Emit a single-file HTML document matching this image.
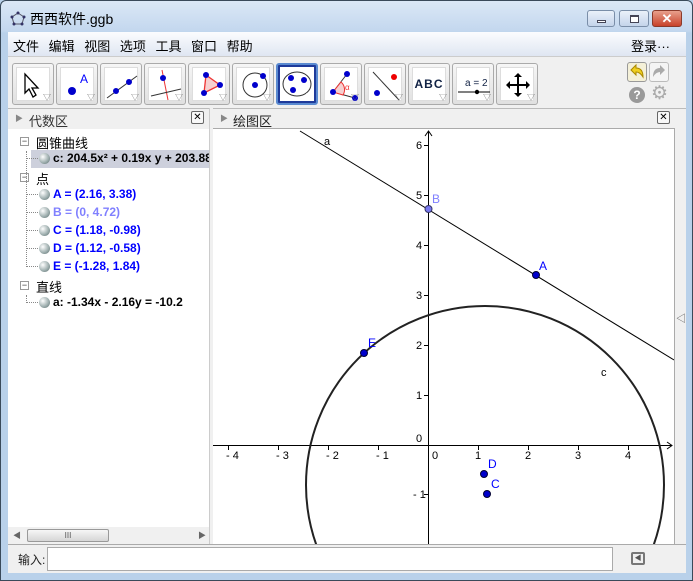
<!DOCTYPE html>
<html style="width:693px;height:581px;overflow:hidden"><head><meta charset="utf-8"><style>
*{margin:0;padding:0;box-sizing:border-box}
html,body{overflow:hidden}
body{width:693px;height:581px;overflow:hidden;position:relative;background:#b9d1ea;font-family:"Liberation Sans","Noto Sans CJK SC",sans-serif;font-size:12px;color:#000}
.a{position:absolute}
.tb{position:absolute;top:63px;width:42px;height:42px;border:1px solid #aaa;border-radius:3px;background:linear-gradient(#f6f6f6,#e0e0e0)}
.tb .in{position:absolute;left:3px;top:3px;width:34px;height:34px;background:#fff;border:1px solid #ddd}
.tb .tri{position:absolute;right:2px;bottom:1px;font-size:8px;color:#777}
.row{position:absolute;left:0;height:18px;font-size:12px;font-weight:bold;white-space:nowrap}
.ball{position:absolute;left:31px;width:11px;height:11px;border-radius:50%;background:radial-gradient(circle at 35% 35%,#fff,#9aa 60%,#566)}
.dot{position:absolute;left:18px;width:12px;border-top:1px dotted #888}
.cat{position:absolute;left:28px;font-size:13px}
.mn{position:absolute;left:12px;width:9px;height:9px;border:1px solid #999;background:#fff;font-size:9px;line-height:6px;text-align:center;color:#333}
</style></head><body>
<div class="a" style="left:0;top:0;width:693px;height:581px;border:1px solid #3a4a5a;border-radius:6px 6px 0 0;background:linear-gradient(#dbe8f6,#c3d7ee 30px,#b9d1ea 32px)"></div>
<svg class="a" style="left:10px;top:11px" width="16" height="16"><polygon points="8,2 14,6 12,13 4,13 2,6" fill="none" stroke="#556" stroke-width="1"/><g fill="#336"><circle cx="8" cy="2" r="1.5"/><circle cx="14" cy="6" r="1.5"/><circle cx="12" cy="13" r="1.5"/><circle cx="4" cy="13" r="1.5"/><circle cx="2" cy="6" r="1.5"/></g></svg>
<div class="a" style="left:30px;top:9px;font-size:14px">西西软件.ggb</div>
<div class="a" style="left:587px;top:10px;width:28px;height:17px;border:1px solid #7a8ea8;border-radius:3px;background:linear-gradient(#eaf1fa,#c4d4ea)"><div class="a" style="left:9px;top:9px;width:9px;height:3px;background:#fff;border:1px solid #445"></div></div>
<div class="a" style="left:619px;top:10px;width:30px;height:17px;border:1px solid #7a8ea8;border-radius:3px;background:linear-gradient(#eaf1fa,#c4d4ea)"><div class="a" style="left:10px;top:4px;width:9px;height:8px;border:1px solid #445;border-top-width:2px;background:#fff"></div></div>
<div class="a" style="left:652px;top:10px;width:30px;height:17px;border:1px solid #8a3a2a;border-radius:3px;background:linear-gradient(#e8a08c,#c8422a);color:#fff;font-weight:bold;text-align:center;font-size:13px;line-height:15px">✕</div>
<div class="a" style="left:8px;top:32px;width:678px;height:541px;background:#f0f0f0"></div>
<div class="a" style="left:8px;top:32px;width:678px;height:24px;background:linear-gradient(#fbfcfe,#dfe6f2)"></div>
<div class="a" style="left:13px;top:36px;font-size:13px;word-spacing:6px">文件 编辑 视图 选项 工具 窗口 帮助</div>
<div class="a" style="left:631px;top:36px;font-size:13px">登录···</div>
<div class="a" style="left:8px;top:56px;width:678px;height:1px;background:#ccc"></div>
<div class="tb" style="left:12px"><div class="in"><svg width="34" height="34"><path d="M8 6 L8 25 L12 21 L16 29 L19 27 L15 20 L21 20 Z" fill="#fff" stroke="#000" stroke-width="1.3"/></svg></div><span class="tri">▽</span></div>
<div class="tb" style="left:56px"><div class="in"><svg width="34" height="34"><circle cx="11" cy="23" r="4" fill="#00c"/><text x="19" y="15" font-family="Liberation Sans" font-size="12" fill="#00f">A</text></svg></div><span class="tri">▽</span></div>
<div class="tb" style="left:100px"><div class="in"><svg width="34" height="34"><line x1="2" y1="30" x2="32" y2="8" stroke="#333"/><circle cx="11" cy="23" r="3" fill="#00c"/><circle cx="24" cy="14" r="3" fill="#00c"/></svg></div><span class="tri">▽</span></div>
<div class="tb" style="left:144px"><div class="in"><svg width="34" height="34"><line x1="13" y1="2" x2="19" y2="32" stroke="#e33"/><line x1="2" y1="28" x2="32" y2="21" stroke="#333"/><circle cx="14" cy="10" r="3" fill="#00c"/></svg></div><span class="tri">▽</span></div>
<div class="tb" style="left:188px"><div class="in"><svg width="34" height="34"><polygon points="13,7 27,17 11,25" fill="#f6d0d0" stroke="#e33" stroke-width="1.3"/><circle cx="13" cy="7" r="3" fill="#00c"/><circle cx="27" cy="17" r="3" fill="#00c"/><circle cx="11" cy="25" r="3" fill="#00c"/></svg></div><span class="tri">▽</span></div>
<div class="tb" style="left:232px"><div class="in"><svg width="34" height="34"><circle cx="18" cy="17" r="12" fill="none" stroke="#333"/><circle cx="18" cy="17" r="3" fill="#00c"/><circle cx="26" cy="8" r="3" fill="#00c"/></svg></div><span class="tri">▽</span></div>
<div class="tb" style="left:276px;border:2px solid #5a8ad0;background:#1e3a9a"><div class="in" style="left:2px;top:2px;border:none"><svg width="34" height="34"><ellipse cx="17" cy="17" rx="14" ry="12" fill="none" stroke="#333"/><circle cx="11" cy="11" r="3" fill="#00c"/><circle cx="24" cy="13" r="3" fill="#00c"/><circle cx="13" cy="23" r="3" fill="#00c"/></svg></div><span class="tri" style="color:#fff">▽</span></div>
<div class="tb" style="left:320px"><div class="in"><svg width="34" height="34"><line x1="8" y1="24" x2="22" y2="6" stroke="#333"/><line x1="8" y1="24" x2="30" y2="30" stroke="#333"/><path d="M16 14 A10 10 0 0 1 18 27 L8 24Z" fill="#f6d0d0" stroke="#e33"/><text x="20" y="22" font-size="8" fill="#e33">α</text><circle cx="8" cy="24" r="3" fill="#00c"/><circle cx="22" cy="6" r="3" fill="#00c"/><circle cx="30" cy="30" r="3" fill="#00c"/></svg></div><span class="tri">▽</span></div>
<div class="tb" style="left:364px"><div class="in"><svg width="34" height="34"><line x1="4" y1="4" x2="30" y2="32" stroke="#333"/><circle cx="25" cy="9" r="3" fill="#e00"/><circle cx="8" cy="25" r="3" fill="#00c"/></svg></div><span class="tri">▽</span></div>
<div class="tb" style="left:408px"><div class="in" style="font-size:12px;font-weight:bold;color:#124;text-align:center;line-height:32px;letter-spacing:1px">ABC</div><span class="tri">▽</span></div>
<div class="tb" style="left:452px"><div class="in"><svg width="34" height="34"><text x="8" y="18" font-family="Liberation Sans" font-size="10" fill="#124">a = 2</text><line x1="1" y1="24" x2="33" y2="24" stroke="#000"/><circle cx="20" cy="24" r="2.2" fill="#000"/></svg></div><span class="tri">▽</span></div>
<div class="tb" style="left:496px"><div class="in"><svg width="34" height="34"><path d="M17 8V26M8 17H26" stroke="#000" stroke-width="2"/><path d="M17 5l-4 4h8zM17 29l-4-4h8zM5 17l4-4v8zM29 17l-4-4v8z" fill="#000"/></svg></div><span class="tri">▽</span></div>
<div class="a" style="left:627px;top:62px;width:20px;height:20px;border:1px solid #999;border-radius:3px;background:#f4f0d8"><svg width="18" height="18"><path d="M3 7 L8 2 L8 5 Q15 5 15 14 Q12 9 8 9 L8 12Z" fill="#f0d020" stroke="#a80"/></svg></div>
<div class="a" style="left:649px;top:62px;width:20px;height:20px;border:1px solid #bbb;border-radius:3px;background:#f4f4f4"><svg width="18" height="18"><path d="M15 7 L10 2 L10 5 Q3 5 3 14 Q6 9 10 9 L10 12Z" fill="#aaa"/></svg></div>
<div class="a" style="left:629px;top:87px;width:16px;height:16px;border-radius:50%;background:#999;color:#fff;font-weight:bold;text-align:center;line-height:16px;font-size:12px">?</div>
<div class="a" style="left:651px;top:84px;font-size:19px;line-height:20px;color:#aaa">⚙</div>
<div class="a" style="left:8px;top:108px;width:678px;height:1px;background:#bbb"></div>
<div class="a" style="left:15px;top:113px;font-size:8px;color:#888">▶</div>
<div class="a" style="left:29px;top:111px;font-size:13px;color:#333">代数区</div>
<div class="a" style="left:191px;top:111px;width:13px;height:13px;border:1px solid #666;border-radius:2px;font-size:10px;line-height:11px;text-align:center;background:#f8f8f8">✕</div>
<div class="a" style="left:220px;top:113px;font-size:8px;color:#888">▶</div>
<div class="a" style="left:233px;top:111px;font-size:13px;color:#222">绘图区</div>
<div class="a" style="left:657px;top:111px;width:13px;height:13px;border:1px solid #666;border-radius:2px;font-size:10px;line-height:11px;text-align:center;background:#f8f8f8">✕</div>
<div class="a" style="left:8px;top:129px;width:201px;height:398px;background:#fff;overflow:hidden">
<div class="mn" style="top:8px">−</div><div class="cat" style="top:4px">圆锥曲线</div>
<div class="a" style="left:23px;top:21px;width:178px;height:18px;background:#cdd0dc"></div>
<div class="dot" style="top:29px"></div><div class="ball" style="top:24px"></div><div class="row" style="left:45px;top:22px">c: 204.5x² + 0.19x y + 203.88</div>
<div class="mn" style="top:44px">−</div><div class="cat" style="top:40px">点</div>
<div class="dot" style="top:65px"></div><div class="ball" style="top:60px"></div><div class="row" style="left:45px;top:58px;color:#00f">A = (2.16, 3.38)</div>
<div class="dot" style="top:83px"></div><div class="ball" style="top:78px"></div><div class="row" style="left:45px;top:76px;color:#8080ff">B = (0, 4.72)</div>
<div class="dot" style="top:101px"></div><div class="ball" style="top:96px"></div><div class="row" style="left:45px;top:94px;color:#00f">C = (1.18, -0.98)</div>
<div class="dot" style="top:119px"></div><div class="ball" style="top:114px"></div><div class="row" style="left:45px;top:112px;color:#00f">D = (1.12, -0.58)</div>
<div class="dot" style="top:137px"></div><div class="ball" style="top:132px"></div><div class="row" style="left:45px;top:130px;color:#00f">E = (-1.28, 1.84)</div>
<div class="a" style="left:18px;top:22px;height:116px;border-left:1px dotted #888"></div>
<div class="mn" style="top:152px">−</div><div class="cat" style="top:148px">直线</div>
<div class="a" style="left:18px;top:166px;height:8px;border-left:1px dotted #888"></div>
<div class="dot" style="top:173px"></div><div class="ball" style="top:168px"></div><div class="row" style="left:45px;top:166px">a: -1.34x - 2.16y = -10.2</div>
</div>
<div class="a" style="left:8px;top:527px;width:201px;height:17px;background:#f0f0f0"></div>
<div class="a" style="left:13px;top:530px;font-size:8px;color:#666">◀</div>
<div class="a" style="left:27px;top:529px;width:82px;height:13px;border:1px solid #999;border-radius:2px;background:linear-gradient(#f6f6f6,#d6d6d6);font-size:8px;text-align:center;line-height:11px;color:#555">III</div>
<div class="a" style="left:198px;top:530px;font-size:8px;color:#666">▶</div>
<div class="a" style="left:209px;top:108px;width:4px;height:437px;background:#f0f0f0;border-left:1px solid #ccc"></div>
<svg class="a" style="left:213px;top:128px" width="461" height="417" viewBox="213 128 461 417" font-family="Liberation Sans" font-size="11">
<rect x="213" y="128" width="461" height="417" fill="#fff"/>
<line x1="213" y1="128.5" x2="674" y2="128.5" stroke="#aaa"/>
<line x1="213" y1="445.5" x2="672" y2="445.5" stroke="#000"/>
<path d="M667 442 L672 445.5 L667 449" fill="none" stroke="#000"/>
<line x1="428.5" y1="131" x2="428.5" y2="545" stroke="#000"/>
<path d="M425 136 L428.5 131 L432 136" fill="none" stroke="#000"/>
<g stroke="#000"><line x1="228.5" y1="446" x2="228.5" y2="450"/><line x1="278.5" y1="446" x2="278.5" y2="450"/><line x1="328.5" y1="446" x2="328.5" y2="450"/><line x1="378.5" y1="446" x2="378.5" y2="450"/><line x1="478.5" y1="446" x2="478.5" y2="450"/><line x1="528.5" y1="446" x2="528.5" y2="450"/><line x1="578.5" y1="446" x2="578.5" y2="450"/><line x1="628.5" y1="446" x2="628.5" y2="450"/>
<line x1="424" y1="145.5" x2="428" y2="145.5"/><line x1="424" y1="195.5" x2="428" y2="195.5"/><line x1="424" y1="245.5" x2="428" y2="245.5"/><line x1="424" y1="295.5" x2="428" y2="295.5"/><line x1="424" y1="345.5" x2="428" y2="345.5"/><line x1="424" y1="395.5" x2="428" y2="395.5"/><line x1="424" y1="494.5" x2="428" y2="494.5"/></g>
<g fill="#000"><text x="226" y="459">- 4</text><text x="276" y="459">- 3</text><text x="326" y="459">- 2</text><text x="376" y="459">- 1</text><text x="432" y="459">0</text><text x="475" y="459">1</text><text x="525" y="459">2</text><text x="575" y="459">3</text><text x="625" y="459">4</text>
<text x="416" y="149">6</text><text x="416" y="199">5</text><text x="416" y="249">4</text><text x="416" y="299">3</text><text x="416" y="349">2</text><text x="416" y="399">1</text><text x="416" y="442">0</text><text x="413" y="498">- 1</text>
<text x="324" y="145">a</text><text x="601" y="376">c</text></g>
<line x1="300" y1="131" x2="674" y2="360" stroke="#000"/>
<circle cx="485" cy="485" r="179" fill="none" stroke="#222" stroke-width="2"/>
<circle cx="428.5" cy="209" r="3.5" fill="#7878ee" stroke="#336"/>
<text x="432" y="203" fill="#8080ff" font-size="12">B</text>
<circle cx="536" cy="275" r="3.5" fill="#00c" stroke="#003"/><text x="539" y="270" fill="#00f" font-size="12">A</text>
<circle cx="364" cy="353" r="3.5" fill="#00c" stroke="#003"/><text x="368" y="347" fill="#00f" font-size="12">E</text>
<circle cx="484" cy="474" r="3.5" fill="#00c" stroke="#003"/><text x="488" y="468" fill="#00f" font-size="12">D</text>
<circle cx="487" cy="494" r="3.5" fill="#00c" stroke="#003"/><text x="491" y="488" fill="#00f" font-size="12">C</text>
</svg>
<div class="a" style="left:674px;top:128px;width:12px;height:417px;background:#f0f0f0;border-left:1px solid #aaa"></div>
<div class="a" style="left:676px;top:310px;font-size:10px;color:#555">◁</div>
<div class="a" style="left:8px;top:544px;width:678px;height:1px;background:#aaa"></div>
<div class="a" style="left:18px;top:551px;font-size:12px;color:#222">输入:</div>
<div class="a" style="left:47px;top:547px;width:566px;height:24px;background:#fff;border:1px solid #aaa"></div>
<div class="a" style="left:631px;top:552px;width:14px;height:13px;border:2px solid #777;border-radius:2px;font-size:7px;line-height:9px;text-align:center;color:#555">◀</div>
</body></html>
